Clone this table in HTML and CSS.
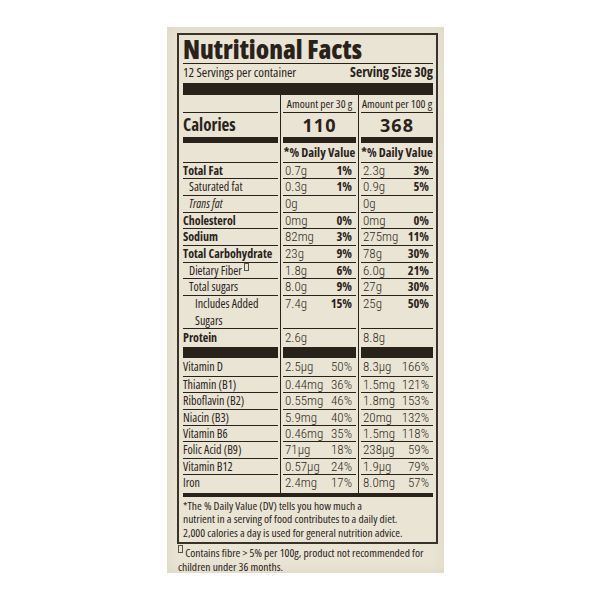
FILE: index.html
```html
<!DOCTYPE html>
<html>
<head>
<meta charset="utf-8">
<link rel="stylesheet" href="styles.css">
</head>
<body>
<div class="card">
  <div class="box">
    <h1 class="title">Nutritional Facts</h1>
    <div class="servings"><span>12 Servings per container</span><b>Serving Size 30g</b></div>
    <div class="bar"></div>
    <div class="table">
      <div class="row head"><div></div><div>Amount per 30 g</div><div>Amount per 100 g</div></div>
      <div class="row cal"><div class="cal-lbl">Calories</div><div class="kcal">110</div><div class="kcal">368</div></div>
      <div class="row dv"><div></div><div>*% Daily Value</div><div>*% Daily Value</div></div>

      <div class="row"><div class="bold">Total Fat</div><div class="val"><span>0.7g</span><b>1%</b></div><div class="val"><span>2.3g</span><b>3%</b></div></div>
      <div class="row"><div class="in1">Saturated fat</div><div class="val"><span>0.3g</span><b>1%</b></div><div class="val"><span>0.9g</span><b>5%</b></div></div>
      <div class="row"><div class="in1 it">Trans fat</div><div class="val"><span>0g</span></div><div class="val"><span>0g</span></div></div>
      <div class="row"><div class="bold">Cholesterol</div><div class="val"><span>0mg</span><b>0%</b></div><div class="val"><span>0mg</span><b>0%</b></div></div>
      <div class="row"><div class="bold">Sodium</div><div class="val"><span>82mg</span><b>3%</b></div><div class="val"><span>275mg</span><b>11%</b></div></div>
      <div class="row"><div class="bold">Total Carbohydrate</div><div class="val"><span>23g</span><b>9%</b></div><div class="val"><span>78g</span><b>30%</b></div></div>
      <div class="row"><div class="in1">Dietary Fiber <i class="sq"></i></div><div class="val"><span>1.8g</span><b>6%</b></div><div class="val"><span>6.0g</span><b>21%</b></div></div>
      <div class="row"><div class="in1">Total sugars</div><div class="val"><span>8.0g</span><b>9%</b></div><div class="val"><span>27g</span><b>30%</b></div></div>
      <div class="row two"><div class="in2">Includes Added<br>Sugars</div><div class="val"><span>7.4g</span><b>15%</b></div><div class="val"><span>25g</span><b>50%</b></div></div>
      <div class="row prot"><div class="bold">Protein</div><div class="val"><span>2.6g</span></div><div class="val"><span>8.8g</span></div></div>

      <div class="row vit first"><div>Vitamin D</div><div class="val"><span>2.5μg</span><span>50%</span></div><div class="val"><span>8.3μg</span><span>166%</span></div></div>
      <div class="row vit"><div>Thiamin (B1)</div><div class="val"><span>0.44mg</span><span>36%</span></div><div class="val"><span>1.5mg</span><span>121%</span></div></div>
      <div class="row vit"><div>Riboflavin (B2)</div><div class="val"><span>0.55mg</span><span>46%</span></div><div class="val"><span>1.8mg</span><span>153%</span></div></div>
      <div class="row vit"><div>Niacin (B3)</div><div class="val"><span>5.9mg</span><span>40%</span></div><div class="val"><span>20mg</span><span>132%</span></div></div>
      <div class="row vit"><div>Vitamin B6</div><div class="val"><span>0.46mg</span><span>35%</span></div><div class="val"><span>1.5mg</span><span>118%</span></div></div>
      <div class="row vit"><div>Folic Acid (B9)</div><div class="val"><span>71μg</span><span>18%</span></div><div class="val"><span>238μg</span><span>59%</span></div></div>
      <div class="row vit"><div>Vitamin B12</div><div class="val"><span>0.57μg</span><span>24%</span></div><div class="val"><span>1.9μg</span><span>79%</span></div></div>
      <div class="row vit last"><div>Iron</div><div class="val"><span>2.4mg</span><span>17%</span></div><div class="val"><span>8.0mg</span><span>57%</span></div></div>
    </div>
    <div class="thick"></div>
    <p class="foot">*The % Daily Value (DV) tells you how much a<br>nutrient in a serving of food contributes to a daily diet.<br>2,000 calories a day is used for general nutrition advice.</p>
  </div>
  <p class="note"><i class="sq"></i> Contains fibre &gt; 5% per 100g, product not recommended for<br>children under 36 months.</p>
</div>
</body>
</html>
```
FILE: styles.css
```css
:root {
  --ink: #29221b;
}

body {
  margin: 0;
  background: #ffffff;
  font-family: "Open Sans", "Liberation Sans", sans-serif;
  font-stretch: condensed;
  color: var(--ink);
}

.card {
  margin: 27px 0 0 167px;
  width: 277px;
  height: 546px;
  box-sizing: border-box;
  padding: 6px 6px 0 10px;
  background: #e9e4d4;
  box-shadow: inset 0 0 14px rgba(140, 120, 80, 0.12);
}

.box {
  border: 2px solid #3a3229;
  padding: 0.5px 3px 0 4px;
}

.title {
  margin: 0;
  font-size: 26px;
  font-weight: 800;
  font-stretch: 77%;
  line-height: 27px;
  border-bottom: 1px solid var(--ink);
  white-space: nowrap;
}

.servings {
  display: flex;
  justify-content: space-between;
  font-size: 13px;
  line-height: 16px;
  padding-bottom: 3.5px;
}

.servings b {
  font-weight: 700;
  font-size: 13.5px;
  font-stretch: 80%;
}

.bar {
  height: 12px;
  background: var(--ink);
}

.table {
  padding-bottom: 1.5px;
  background:
    linear-gradient(var(--ink), var(--ink)) 97px 0 / 1.4px 100% no-repeat,
    linear-gradient(var(--ink), var(--ink)) 175px 0 / 1.4px 100% no-repeat;
}

.row {
  display: grid;
  grid-template-columns: 95px 73px 72px;
  column-gap: 5px;
}

.row > div {
  border-bottom: 1px solid var(--ink);
  height: 15.7px;
  line-height: 16.9px;
  font-size: 12px;
  white-space: nowrap;
}

.row.head > div {
  height: 17px;
  line-height: 17.5px;
  font-size: 11.5px;
  text-align: center;
}

.row.cal > div {
  height: 24px;
  line-height: 24px;
  border-bottom-width: 6px;
}

.cal-lbl {
  font-size: 17px !important;
  font-weight: 700;
  font-stretch: 87.5%;
}

.kcal {
  font-size: 18px !important;
  font-weight: 700;
  font-stretch: normal;
  text-align: center;
  letter-spacing: 1px;
}

.row.dv > div {
  height: 18.5px;
  line-height: 19.5px;
  font-size: 12.5px;
  font-weight: 700;
  text-align: center;
}

.bold {
  font-weight: 700;
}

.in1 {
  padding-left: 6px;
}

.in2 {
  padding-left: 12px;
}

.it {
  font-style: italic;
}

.val {
  display: flex;
  justify-content: space-between;
  padding: 0 4px 0 2px;
}

.val span {
  font-family: "Roboto Condensed", "Roboto", sans-serif;
  font-weight: 300;
  font-size: 13px;
  color: #2f2821;
}

.val b {
  font-weight: 700;
  font-size: 12.5px;
}

.row.two > div {
  height: 32.4px;
}

.row.two > .in2 {
  line-height: 16.8px;
}

.row.prot > div {
  height: 18px;
  line-height: 18.5px;
  border-bottom-width: 11px;
}

.row.vit > div {
  height: 15.4px;
  line-height: 16.6px;
}

.row.vit.first > div {
  height: 17.4px;
  line-height: 18px;
}

.row.vit.last > div {
  border-bottom: none;
  height: 16px;
}

.thick {
  height: 4.5px;
  background: var(--ink);
}

.foot {
  margin: 0;
  padding: 1.5px 0 2.5px;
  font-size: 11.5px;
  line-height: 13.5px;
  white-space: nowrap;
}

.note {
  margin: 1px 0 0 1px;
  font-size: 11.5px;
  line-height: 14px;
  white-space: nowrap;
}

.sq {
  display: inline-block;
  width: 3px;
  height: 6px;
  border: 1px solid currentColor;
  vertical-align: 4px;
  opacity: 0.75;
}
```
